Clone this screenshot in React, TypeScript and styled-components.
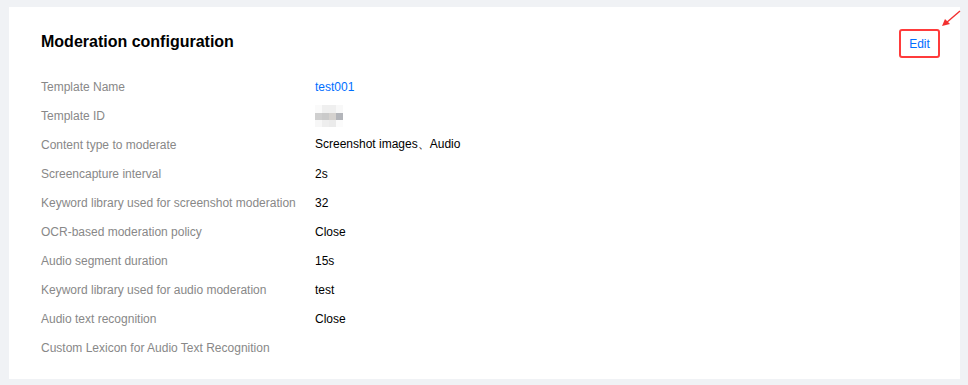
import { Fragment } from 'react';
import styled, { createGlobalStyle } from 'styled-components';

const GlobalStyle = createGlobalStyle`
    html, body {
        margin: 0;
        padding: 0;
        background: #f0f2f5;
        font-family: "Liberation Sans", Arial, sans-serif;
    }
`

const Page = styled.div`
    position: relative;
    width: 968px;
    height: 385px;
    padding: 7px 8px 6px 9px;
    box-sizing: border-box;
`

const Card = styled.section`
    background: #fff;
    height: 100%;
    box-sizing: border-box;
    padding: 22px 20px 16px 32px;
    display: flex;
    flex-direction: column;
`

const Header = styled.div`
    display: flex;
    align-items: center;
    justify-content: space-between;
    height: 29px;
    margin-bottom: 14px;

    h1 {
        margin: -3px 0 0;
        font-size: 16px;
        font-weight: 700;
        color: #000;
    }
`

const EditLink = styled.a`
    display: inline-flex;
    align-items: center;
    justify-content: center;
    box-sizing: border-box;
    width: 41px;
    height: 29px;
    border: 2px solid #ff3b3b;
    border-radius: 3px;
    font-size: 12px;
    color: #006eff;
    text-decoration: none;
    cursor: pointer;
`

const Arrow = styled.svg`
    position: absolute;
    top: 8px;
    left: 940px;
`

const InfoList = styled.dl`
    margin: 0;
    display: grid;
    grid-template-columns: 274px 1fr;
    grid-auto-rows: 29px;
    align-items: center;
    font-size: 12px;

    dt {
        color: #888;
    }
    dd {
        margin: 0;
        color: #000;
    }
`

const ValueLink = styled.a`
    color: #006eff;
    text-decoration: none;
`

const Masked = styled.div`
    display: grid;
    grid-template-columns: repeat(4, 7px);
    grid-template-rows: 8px 7px 7px;
`

const Cell = styled.span<{ $c: string }>`
    background: ${p => p.$c};
`

const mask = [
    '#fafafa', '#efefef', '#efefef', '#f8f8f8',
    '#cfcfcf', '#cacaca', '#d5d2cf', '#b3b5ba',
    '#f7f7f7', '#eeeeee', '#ebebeb', '#fbfbfb',
]

const rows: [string, string][] = [
    ['Content type to moderate', 'Screenshot images、Audio'],
    ['Screencapture interval', '2s'],
    ['Keyword library used for screenshot moderation', '32'],
    ['OCR-based moderation policy', 'Close'],
    ['Audio segment duration', '15s'],
    ['Keyword library used for audio moderation', 'test'],
    ['Audio text recognition', 'Close'],
    ['Custom Lexicon for Audio Text Recognition', ''],
]

export default function App() {
    return (
        <Page>
            <GlobalStyle />
            <Card>
                <Header>
                    <h1>Moderation configuration</h1>
                    <EditLink>Edit</EditLink>
                </Header>
                <InfoList>
                    <dt>Template Name</dt>
                    <dd><ValueLink>test001</ValueLink></dd>
                    <dt>Template ID</dt>
                    <dd>
                        <Masked>
                            {mask.map((c, i) => <Cell key={i} $c={c} />)}
                        </Masked>
                    </dd>
                    {rows.map(([label, value]) => (
                        <Fragment key={label}>
                            <dt>{label}</dt>
                            <dd>{value}</dd>
                        </Fragment>
                    ))}
                </InfoList>
            </Card>
            <Arrow width="24" height="22" viewBox="0 0 24 22">
                <line x1="20" y1="3" x2="6" y2="15" stroke="#f23030" strokeWidth="1.4" />
                <polygon points="2,18 5,11 10,16" fill="#f23030" />
            </Arrow>
        </Page>
    )
}
